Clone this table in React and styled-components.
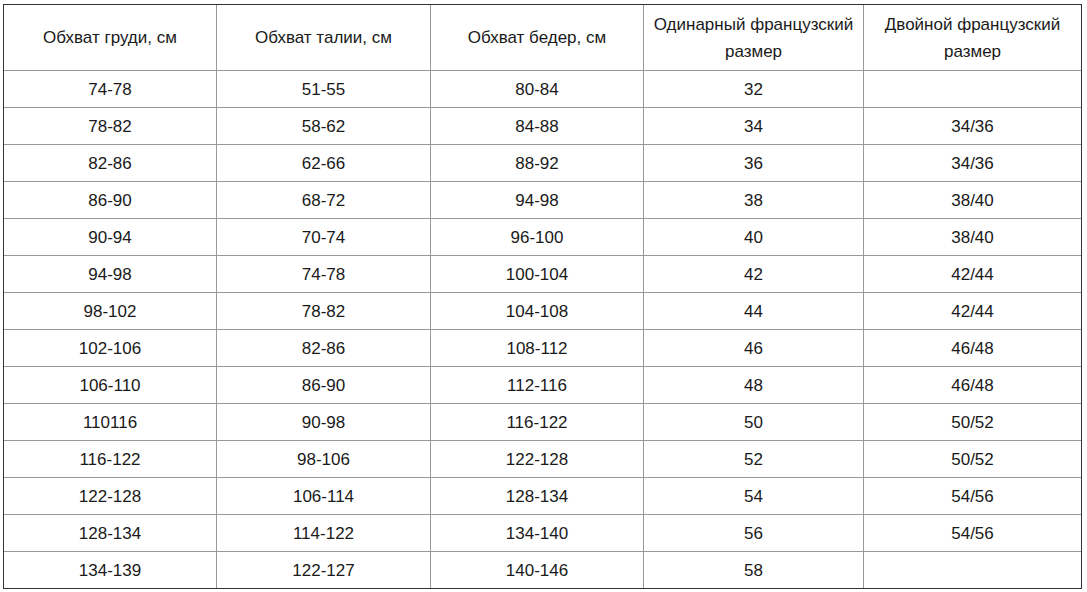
import React from "react";
import styled, { createGlobalStyle } from "styled-components";

const Global = createGlobalStyle`
  html, body { margin: 0; padding: 0; background: #fff; }
  body { padding: 4px 0 0 3px; font-family: "Liberation Sans", Arial, sans-serif; }
`;

const Table = styled.table`
  border-collapse: separate;
  border-spacing: 0;
  table-layout: fixed;
  border: 1px solid #333;
  font-family: "Liberation Sans", Arial, sans-serif;
  font-size: 17px;
  color: #1a1a1a;
`;

const HeadCell = styled.th`
  box-sizing: border-box;
  width: ${(p) => p.$w}px;
  height: 66px;
  padding: 0 6px;
  font-weight: normal;
  line-height: 27px;
  text-align: center;
  vertical-align: middle;
  border-bottom: 1px solid #999;
  border-right: ${(p) => (p.$last ? "none" : "1px solid #999")};
`;

const Cell = styled.td`
  box-sizing: border-box;
  height: ${(p) => (p.$lastRow ? 36 : 37)}px;
  padding: 2px 6px 0;
  line-height: 20px;
  text-align: center;
  vertical-align: middle;
  border-bottom: ${(p) => (p.$lastRow ? "none" : "1px solid #999")};
  border-right: ${(p) => (p.$last ? "none" : "1px solid #999")};
`;

const headers = [
  ["Обхват груди, см", 213],
  ["Обхват талии, см", 214],
  ["Обхват бедер, см", 213],
  ["Одинарный французский размер", 220],
  ["Двойной французский размер", 217],
];

const rows = [
  ["74-78", "51-55", "80-84", "32", ""],
  ["78-82", "58-62", "84-88", "34", "34/36"],
  ["82-86", "62-66", "88-92", "36", "34/36"],
  ["86-90", "68-72", "94-98", "38", "38/40"],
  ["90-94", "70-74", "96-100", "40", "38/40"],
  ["94-98", "74-78", "100-104", "42", "42/44"],
  ["98-102", "78-82", "104-108", "44", "42/44"],
  ["102-106", "82-86", "108-112", "46", "46/48"],
  ["106-110", "86-90", "112-116", "48", "46/48"],
  ["110116", "90-98", "116-122", "50", "50/52"],
  ["116-122", "98-106", "122-128", "52", "50/52"],
  ["122-128", "106-114", "128-134", "54", "54/56"],
  ["128-134", "114-122", "134-140", "56", "54/56"],
  ["134-139", "122-127", "140-146", "58", ""],
];

export default function App() {
  return (
    <>
      <Global />
      <Table>
        <thead>
          <tr>
            {headers.map(([t, w], i) => (
              <HeadCell key={i} $w={w} $last={i === headers.length - 1}>
                {t}
              </HeadCell>
            ))}
          </tr>
        </thead>
        <tbody>
          {rows.map((r, ri) => (
            <tr key={ri}>
              {r.map((c, ci) => (
                <Cell
                  key={ci}
                  $last={ci === r.length - 1}
                  $lastRow={ri === rows.length - 1}
                >
                  {c}
                </Cell>
              ))}
            </tr>
          ))}
        </tbody>
      </Table>
    </>
  );
}
